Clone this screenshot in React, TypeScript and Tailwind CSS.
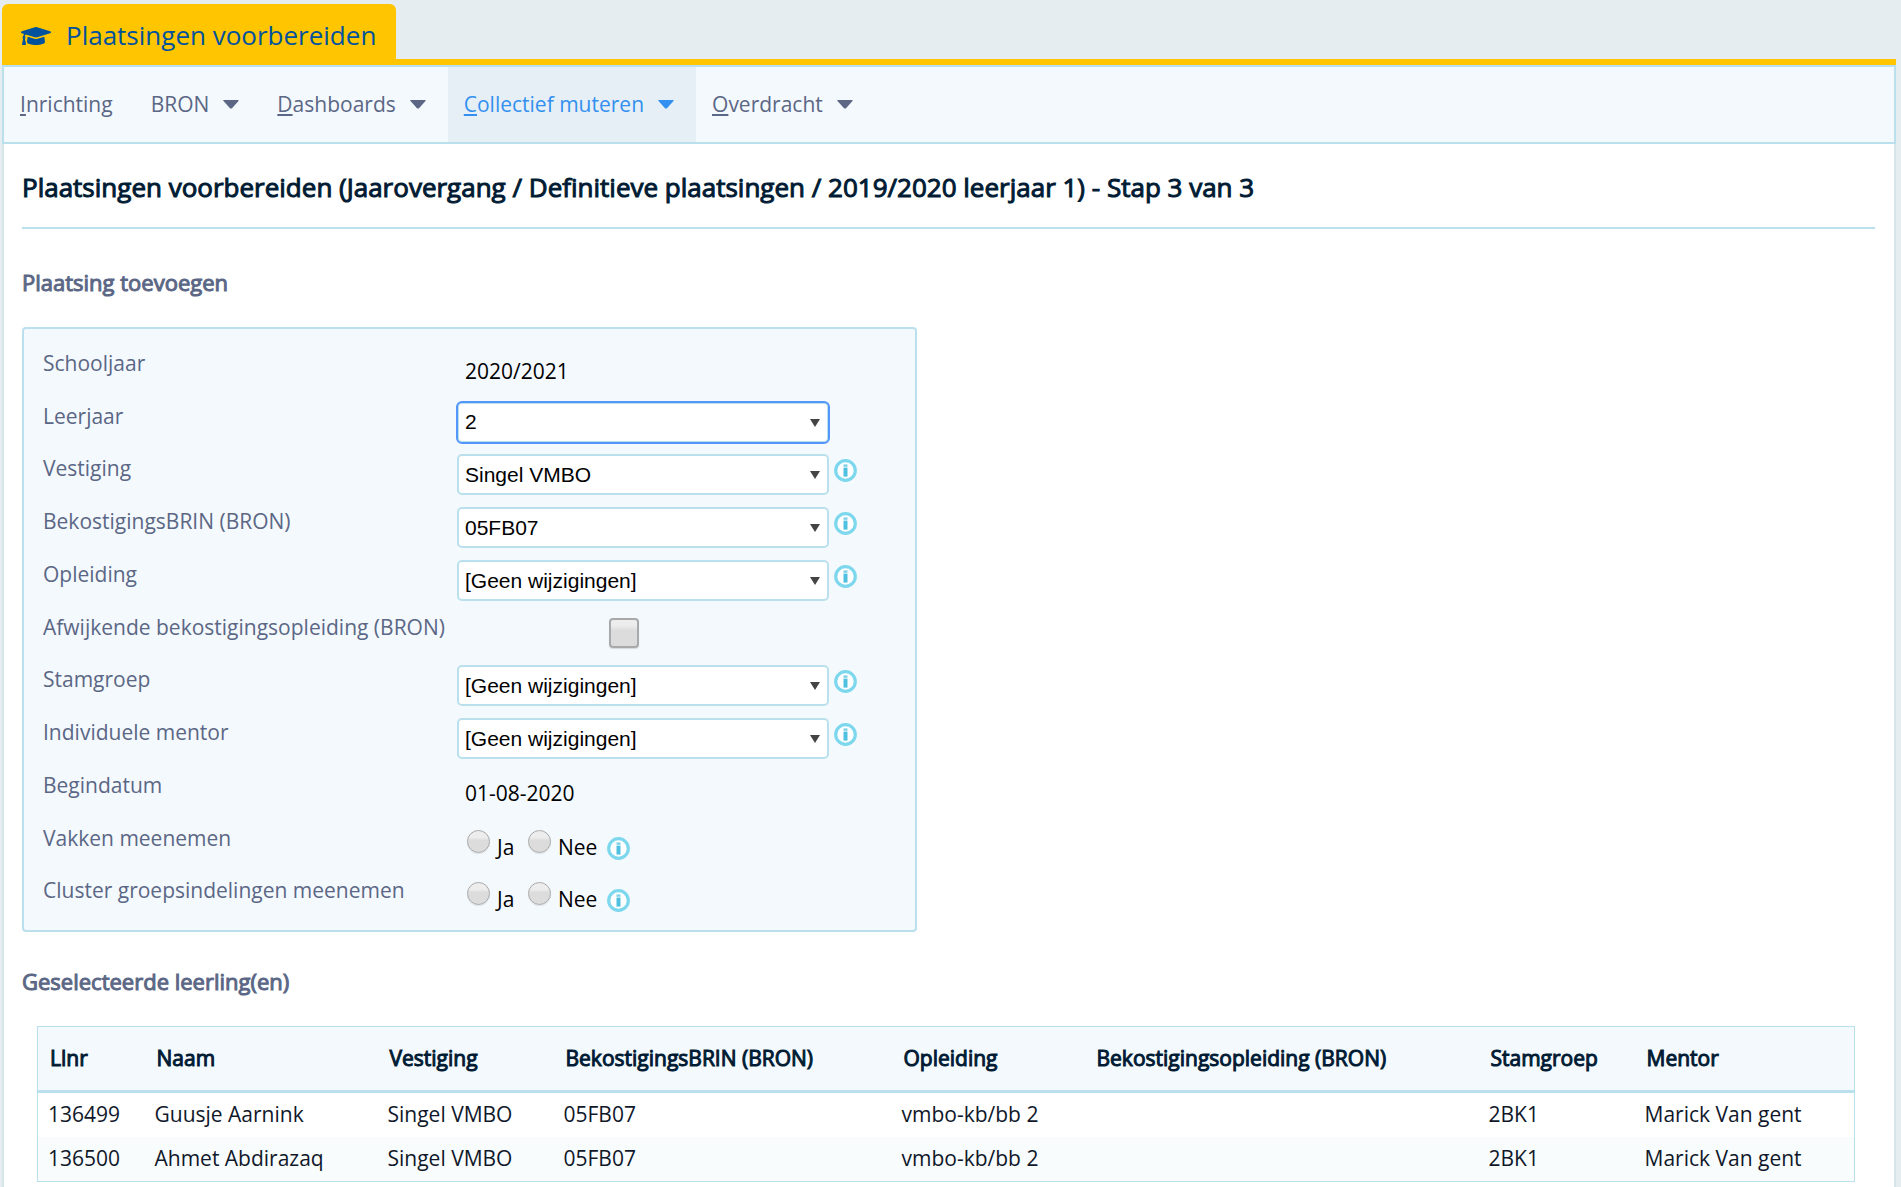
import { ReactNode } from "react";
import { FaGraduationCap } from "react-icons/fa";

const menuItems = [
  { key: "I", rest: "nrichting", dropdown: false },
  { key: "", rest: "BRON", dropdown: true },
  { key: "D", rest: "ashboards", dropdown: true },
  { key: "C", rest: "ollectief muteren", dropdown: true, active: true },
  { key: "O", rest: "verdracht", dropdown: true },
];

const columns = [
  { label: "Llnr", width: "w-[107px]" },
  { label: "Naam", width: "w-[233px]" },
  { label: "Vestiging", width: "w-[176px]" },
  { label: "BekostigingsBRIN (BRON)", width: "w-[338px]" },
  { label: "Opleiding", width: "w-[193px]" },
  { label: "Bekostigingsopleiding (BRON)", width: "w-[394px]" },
  { label: "Stamgroep", width: "w-[156px]" },
  { label: "Mentor", width: "" },
];

const students = [
  ["136499", "Guusje Aarnink", "Singel VMBO", "05FB07", "vmbo-kb/bb 2", "", "2BK1", "Marick Van gent"],
  ["136500", "Ahmet Abdirazaq", "Singel VMBO", "05FB07", "vmbo-kb/bb 2", "", "2BK1", "Marick Van gent"],
];

function InfoButton({ label }: { label: string }) {
  return (
    <button type="button" aria-label={`Info ${label}`} className="block size-[23px] shrink-0">
      <svg viewBox="0 0 23 23" className="size-full">
        <circle cx="11.5" cy="11.5" r="9.8" fill="#fff" stroke="#7dd7ed" strokeWidth="3.2" />
        <rect x="9.5" y="5.4" width="4" height="2.4" fill="#7dd0e6" />
        <rect x="9.5" y="8.6" width="4" height="9" fill="#4fc0e0" />
      </svg>
    </button>
  );
}

// One line of the form: label on the left, control on the right
function Row({ label, htmlFor, children }: { label: string; htmlFor?: string; children: ReactNode }) {
  return (
    <div className="flex items-start">
      {htmlFor ? (
        <label htmlFor={htmlFor} className="w-[414px] shrink-0 leading-7 text-[#5b6785]">
          {label}
        </label>
      ) : (
        <span className="w-[414px] shrink-0 leading-7 text-[#5b6785]">{label}</span>
      )}
      {children}
    </div>
  );
}

function SelectRow({ id, label, value, info = true, focused = false }: {
  id: string;
  label: string;
  value: string;
  info?: boolean;
  focused?: boolean;
}) {
  return (
    <Row label={label} htmlFor={id}>
      <div className="flex gap-[5px]">
        <div className="relative">
          <select
            id={id}
            defaultValue={value}
            className={`h-[41px] w-[372px] appearance-none rounded-[5px] border-2 border-[#bae0ed] bg-white pl-1.5 font-['Liberation_Sans',sans-serif] text-[21px] text-black ${
              focused ? "outline-2 -outline-offset-1 outline-[#5596fb]" : "outline-none"
            }`}
          >
            <option>{value}</option>
          </select>
          <svg viewBox="0 0 10 8" className="pointer-events-none absolute top-[17px] right-[9px] h-2 w-2.5">
            <path d="M0 0H10L5 8Z" fill="#444" />
          </svg>
        </div>
        {info && (
          <div className="pt-[5px]">
            <InfoButton label={label} />
          </div>
        )}
      </div>
    </Row>
  );
}

function RadioRow({ name, label }: { name: string; label: string }) {
  const radio =
    "size-[23px] appearance-none rounded-full border border-[#a9a9a9] bg-linear-to-b from-[#ededed] from-30% to-[#dcdcdc] to-45% shadow-[0_1px_1px_#e0e4e8]";
  return (
    <Row label={label}>
      <div role="radiogroup" aria-label={label} className="flex items-start pt-1.5 pl-2.5 text-black">
        <label className="flex w-[61px] gap-[7px]">
          <input type="radio" name={name} className={radio} />
          <span className="pt-[3px] leading-7">Ja</span>
        </label>
        <label className="flex w-[79px] gap-[7px]">
          <input type="radio" name={name} className={radio} />
          <span className="pt-[3px] leading-7">Nee</span>
        </label>
        <div className="pt-[7px]">
          <InfoButton label={label} />
        </div>
      </div>
    </Row>
  );
}

export default function App() {
  return (
    <div className="min-h-screen bg-[#e5edf0] pt-1 pr-[5px] pl-0.5 font-['Open_Sans',sans-serif] text-[21px]">
      <header className="border-b-[6px] border-[#ffc600]">
        <div className="flex h-[55px] w-fit items-center gap-[15px] rounded-t-md bg-[#ffc600] pt-2 pr-5 pl-[19px] text-[#00529c]">
          <FaGraduationCap className="size-[30px]" />
          <span className="text-[26px]">Plaatsingen voorbereiden</span>
        </div>
      </header>

      <nav className="flex h-[79px] items-stretch border-2 border-[#bae0ed] bg-[#f4f9fd]">
        {menuItems.map((item) => (
          <a
            key={item.rest}
            href="#"
            className={`flex items-center gap-3.5 pr-[22px] pl-4 ${
              item.active ? "bg-[#e6eff5] text-[#3490f0]" : "text-[#5b6785]"
            }`}
          >
            <span>
              <span className="underline decoration-2 underline-offset-2">{item.key}</span>
              {item.rest}
            </span>
            {item.dropdown && (
              <svg viewBox="0 0 16 9" className="h-[9px] w-4" fill="currentColor">
                <path d="M0 .5Q0 0 1 0H15Q16 0 15.5 1L9 8.2Q8 9 7 8.2L.5 1Z" />
              </svg>
            )}
          </a>
        ))}
      </nav>

      <main className="min-h-[1043px] border-x-2 border-[#d5e5ea] bg-white pr-[19px] pl-[18px]">
        <h1 className="border-b-2 border-[#bae0ed] pt-6 pb-5 text-[26px] leading-[39px] font-normal text-[#001b33] [-webkit-text-stroke:1px]">
          Plaatsingen voorbereiden (Jaarovergang / Definitieve plaatsingen / 2019/2020 leerjaar 1) - Stap 3 van 3
        </h1>

        <h2 className="pt-[38px] pb-[30px] text-[22px] leading-[30px] font-normal text-[#5b6785] [-webkit-text-stroke:1px]">
          Plaatsing toevoegen
        </h2>

        <form className="grid min-h-[605px] w-[895px] auto-rows-fr rounded-[4px] border-2 border-[#bae0ed] bg-[#f4f9fd] pt-5 pb-px pl-[19px]">
          <Row label="Schooljaar">
            <span className="pt-2 pl-2 leading-7 text-black">2020/2021</span>
          </Row>
          <SelectRow id="leerjaar" label="Leerjaar" value="2" info={false} focused />
          <SelectRow id="vestiging" label="Vestiging" value="Singel VMBO" />
          <SelectRow id="brin" label="BekostigingsBRIN (BRON)" value="05FB07" />
          <SelectRow id="opleiding" label="Opleiding" value="[Geen wijzigingen]" />
          <Row label="Afwijkende bekostigingsopleiding (BRON)" htmlFor="afwijkend">
            <div className="flex w-[334px] justify-center pt-[5px]">
              <input
                id="afwijkend"
                type="checkbox"
                className="size-[30px] appearance-none rounded-[4px] border-2 border-[#a9a9a9] bg-linear-to-b from-[#ededed] from-20% to-[#dcdcdc] to-40% shadow-[0_1px_1px_#d5d9dd]"
              />
            </div>
          </Row>
          <SelectRow id="stamgroep" label="Stamgroep" value="[Geen wijzigingen]" />
          <SelectRow id="mentor" label="Individuele mentor" value="[Geen wijzigingen]" />
          <Row label="Begindatum">
            <span className="pt-2 pl-2 leading-7 text-black">01-08-2020</span>
          </Row>
          <RadioRow name="vakken" label="Vakken meenemen" />
          <RadioRow name="clusters" label="Cluster groepsindelingen meenemen" />
        </form>

        <h2 className="pt-[34px] pb-[30px] text-[22px] leading-[30px] font-normal text-[#5b6785] [-webkit-text-stroke:1px]">
          Geselecteerde leerling(en)
        </h2>

        <div className="pr-5 pl-[15px]">
          <table className="w-full table-fixed border border-[#bae0ed] text-left">
            <thead>
              <tr className="h-[65px] border-b-[3px] border-[#bae0ed] bg-[#f4f9fd] text-[#001b33]">
                {columns.map((column) => (
                  <th
                    key={column.label}
                    className={`${column.width} pl-3 font-normal whitespace-nowrap [-webkit-text-stroke:1px]`}
                  >
                    {column.label}
                  </th>
                ))}
              </tr>
            </thead>
            <tbody>
              {students.map((student) => (
                <tr key={student[0]} className="h-[45px] text-[#10182a] even:bg-[#f8fcfd]">
                  {student.map((cell, i) => (
                    <td key={i} className="pl-2.5 whitespace-nowrap">
                      {cell}
                    </td>
                  ))}
                </tr>
              ))}
            </tbody>
          </table>
        </div>
      </main>
    </div>
  );
}
